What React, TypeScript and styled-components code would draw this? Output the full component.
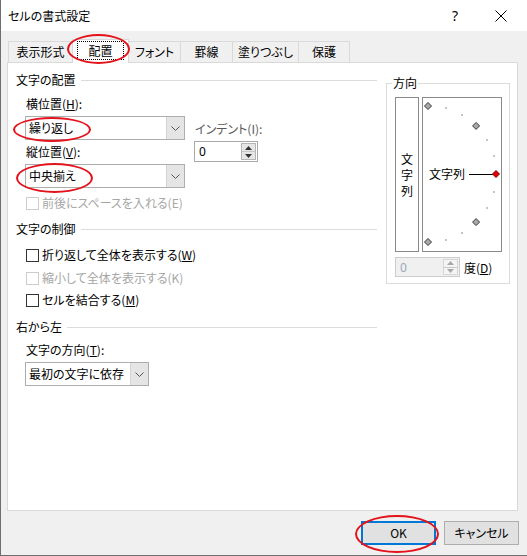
import React from "react";
import styled, { createGlobalStyle } from "styled-components";

const Global = createGlobalStyle`
  html, body { margin: 0; padding: 0; background: #ffffff; }
  body {
    font-family: "Noto Sans CJK JP", "Noto Sans", sans-serif;
    font-size: 12px;
    color: #000;
    font-feature-settings: "palt";
  }
  * { box-sizing: border-box; }
`;

const Window = styled.div`
  position: relative;
  width: 527px;
  height: 556px;
  border-left: 1px solid #6e6e6e;
  border-bottom: 1px solid #6e6e6e;
  background: #f0f0f0;
  display: flex;
  flex-direction: column;
  overflow: hidden;
`;

const TitleBar = styled.div`
  height: 31px;
  background: #ffffff;
  display: flex;
  align-items: center;
  padding-left: 7px;
  padding-right: 3px;
`;

const Title = styled.div`
  flex: 1;
  line-height: 16px;
`;

const CaptionButton = styled.div`
  width: 46px;
  height: 31px;
  display: flex;
  align-items: center;
  justify-content: center;
  font-family: "Noto Sans", "DejaVu Sans", sans-serif;
  font-size: 14px;
`;

const Body = styled.div`
  display: flex;
  flex-direction: column;
  padding: 8px 8px 0 6px;
`;

const TabStrip = styled.div`
  position: relative;
  z-index: 1;
  display: flex;
  align-items: flex-end;
  height: 24px;
  margin-left: 1px;
  margin-bottom: -1px;
`;

const Tab = styled.div<{ $w: number; $active?: boolean; $first?: boolean }>`
  position: relative;
  width: ${(p) => p.$w}px;
  height: ${(p) => (p.$active ? 24 : 21)}px;
  margin-bottom: ${(p) => (p.$active ? 0 : 1)}px;
  margin-left: ${(p) => (p.$first ? 0 : -1)}px;
  z-index: ${(p) => (p.$active ? 2 : 1)};
  border: 1px solid #d9d9d9;
  border-bottom: none;
  background: ${(p) => (p.$active ? "#ffffff" : "#f0f0f0")};
  display: flex;
  align-items: ${(p) => (p.$active ? "flex-start" : "center")};
  justify-content: center;
  padding-top: ${(p) => (p.$active ? 1 : 0)}px;
  line-height: 16px;
`;

const FocusRect = styled.div`
  width: 47px;
  height: 19px;
  border: 1px dotted #000;
  display: flex;
  align-items: center;
  justify-content: center;
  line-height: 16px;
`;

const Panel = styled.div`
  width: 511px;
  height: 449px;
  background: #ffffff;
  border: 1px solid #d9d9d9;
  display: flex;
  padding-left: 8px;
`;

const LeftCol = styled.div`
  width: 361px;
  display: flex;
  flex-direction: column;
  padding-top: 9px;
`;

const GroupHeader = styled.div<{ $mt?: number }>`
  display: flex;
  align-items: center;
  height: 16px;
  line-height: 16px;
  margin-top: ${(p) => p.$mt ?? 0}px;
  &::after {
    content: "";
    flex: 1;
    height: 1px;
    background: #dcdcdc;
    margin-left: 5px;
    margin-top: 1px;
  }
`;

const Sub = styled.div`
  display: flex;
  flex-direction: column;
  padding-left: 9px;
`;

const FieldRow = styled.div`
  display: flex;
`;

const Column = styled.div<{ $mt?: number; $ml?: number }>`
  display: flex;
  flex-direction: column;
  margin-top: ${(p) => p.$mt ?? 0}px;
  margin-left: ${(p) => p.$ml ?? 0}px;
`;

const Label = styled.div<{ $mt?: number; $muted?: boolean }>`
  height: 16px;
  line-height: 16px;
  padding-left: 1px;
  margin-top: ${(p) => p.$mt ?? 0}px;
  color: ${(p) => (p.$muted ? "#5a5a5a" : "#000")};
  white-space: nowrap;
`;

const ComboBox = styled.div<{ $w: number }>`
  width: ${(p) => p.$w}px;
  height: 24px;
  margin-top: 4px;
  display: flex;
  border: 1px solid #adadad;
  background: #ffffff;
`;

const ComboValue = styled.div`
  flex: 1;
  padding-left: 3px;
  line-height: 22px;
`;

const ComboArrow = styled.div`
  width: 18px;
  background: #e5e5e5;
  border-left: 1px solid #d4d4d4;
  display: flex;
  align-items: center;
  justify-content: center;
`;

const Spin = styled.div<{ $w: number; $h: number; $disabled?: boolean; $mt?: number }>`
  width: ${(p) => p.$w}px;
  height: ${(p) => p.$h}px;
  margin-top: ${(p) => p.$mt ?? 0}px;
  border: 1px solid ${(p) => (p.$disabled ? "#cccccc" : "#a9a9a9")};
  background: ${(p) => (p.$disabled ? "#f0f0f0" : "#ffffff")};
  display: flex;
  padding: 1px;
`;

const SpinValue = styled.div<{ $disabled?: boolean }>`
  flex: 1;
  padding-left: 3px;
  display: flex;
  align-items: center;
  font-family: "Noto Sans", "DejaVu Sans", sans-serif;
  font-size: 12px;
  color: ${(p) => (p.$disabled ? "#9aa9bd" : "#000")};
`;

const SpinButtons = styled.div<{ $disabled?: boolean }>`
  width: 15px;
  display: flex;
  flex-direction: column;
  border: 1px solid ${(p) => (p.$disabled ? "#d6d6d6" : "#b5b5b5")};
  background: ${(p) => (p.$disabled ? "#f4f4f4" : "#e6e6e6")};
`;

const SpinHalf = styled.div<{ $bottom?: boolean }>`
  flex: 1;
  display: flex;
  align-items: center;
  justify-content: center;
  border-top: ${(p) => (p.$bottom ? "1px solid #c8c8c8" : "none")};
`;

const CheckRow = styled.div<{ $mt?: number; $disabled?: boolean }>`
  display: flex;
  align-items: center;
  gap: 3px;
  height: 16px;
  line-height: 16px;
  padding-left: 1px;
  margin-top: ${(p) => p.$mt ?? 0}px;
  color: ${(p) => (p.$disabled ? "#a6a6a6" : "#000")};
  white-space: nowrap;
`;

const CheckBox = styled.div<{ $disabled?: boolean }>`
  width: 13px;
  height: 13px;
  border: 1px solid ${(p) => (p.$disabled ? "#cccccc" : "#333333")};
  background: #ffffff;
`;

const OrientGroup = styled.div`
  position: relative;
  width: 124px;
  height: 201px;
  margin-left: 9px;
  margin-top: 20px;
  border: 1px solid #dcdcdc;
  padding: 13px 0 0 8px;
  display: flex;
  flex-direction: column;
`;

const Legend = styled.div`
  position: absolute;
  left: 5px;
  top: -9px;
  background: #ffffff;
  padding: 0 1px;
  line-height: 16px;
`;

const OrientRow = styled.div`
  display: flex;
  gap: 3px;
`;

const VertBox = styled.div`
  width: 24px;
  height: 155px;
  border: 1px solid #8a8a8a;
  display: flex;
  flex-direction: column;
  align-items: center;
  justify-content: center;
  line-height: 16px;
`;

const DialBox = styled.div`
  position: relative;
  width: 80px;
  height: 155px;
  border: 1px solid #8a8a8a;
`;

const DialText = styled.div`
  position: absolute;
  left: 6px;
  top: 68px;
  line-height: 16px;
  white-space: nowrap;
`;

const DegreeRow = styled.div`
  display: flex;
  align-items: center;
  margin-top: 5px;
  gap: 4px;
`;

const Footer = styled.div`
  display: flex;
  justify-content: flex-end;
  gap: 8px;
  margin-top: 10px;
`;

const Button = styled.div<{ $default?: boolean }>`
  width: 75px;
  height: 24px;
  background: #e1e1e1;
  border: ${(p) => (p.$default ? "2px solid #0078d7" : "1px solid #adadad")};
  display: flex;
  align-items: center;
  justify-content: center;
  line-height: 16px;
`;

const Ellipse = styled.div<{ $x: number; $y: number; $w: number; $h: number }>`
  position: absolute;
  left: ${(p) => p.$x}px;
  top: ${(p) => p.$y}px;
  width: ${(p) => p.$w}px;
  height: ${(p) => p.$h}px;
  border: 2px solid #e3121b;
  border-radius: 50%;
  pointer-events: none;
  z-index: 5;
`;

const Chevron = () => (
  <svg width="9" height="5" viewBox="0 0 9 5">
    <polyline points="0.5,0.5 4.5,4.5 8.5,0.5" fill="none" stroke="#555" strokeWidth="1" />
  </svg>
);

const TriUp = ({ color }: { color: string }) => (
  <svg width="7" height="4" viewBox="0 0 7 4">
    <polygon points="0,4 7,4 3.5,0" fill={color} />
  </svg>
);

const TriDown = ({ color }: { color: string }) => (
  <svg width="7" height="4" viewBox="0 0 7 4">
    <polygon points="0,0 7,0 3.5,4" fill={color} />
  </svg>
);

const CloseIcon = () => (
  <svg width="12" height="12" viewBox="0 0 12 12">
    <line x1="0.5" y1="0.5" x2="11.5" y2="11.5" stroke="#000" strokeWidth="1" />
    <line x1="11.5" y1="0.5" x2="0.5" y2="11.5" stroke="#000" strokeWidth="1" />
  </svg>
);

const Combo = ({ w, value }: { w: number; value: string }) => (
  <ComboBox $w={w}>
    <ComboValue>{value}</ComboValue>
    <ComboArrow>
      <Chevron />
    </ComboArrow>
  </ComboBox>
);

const SpinBox = ({ w, h, mt, disabled }: { w: number; h: number; mt?: number; disabled?: boolean }) => {
  const c = disabled ? "#a8a8a8" : "#333";
  return (
    <Spin $w={w} $h={h} $mt={mt} $disabled={disabled}>
      <SpinValue $disabled={disabled}>0</SpinValue>
      <SpinButtons $disabled={disabled}>
        <SpinHalf>
          <TriUp color={c} />
        </SpinHalf>
        <SpinHalf $bottom>
          <TriDown color={c} />
        </SpinHalf>
      </SpinButtons>
    </Spin>
  );
};

const Dial = () => {
  const cx = 5;
  const cy = 76;
  const r = 68;
  const items: React.ReactNode[] = [];
  for (let a = -90; a <= 90; a += 15) {
    const rad = (a * Math.PI) / 180;
    const x = cx + r * Math.cos(rad);
    const y = cy - r * Math.sin(rad);
    if (a % 45 === 0) {
      const s = 3.5;
      const red = a === 0;
      items.push(
        <polygon
          key={a}
          points={`${x},${y - s} ${x + s},${y} ${x},${y + s} ${x - s},${y}`}
          fill={red ? "#e00000" : "#a8a8a8"}
          stroke={red ? "#8a0000" : "#3a3a3a"}
          strokeWidth="1"
        />
      );
    } else {
      items.push(<rect key={a} x={Math.round(x) - 1} y={Math.round(y) - 1} width="2" height="2" fill="#c4c4c4" />);
    }
  }
  return (
    <DialBox>
      <svg width="78" height="153" viewBox="0 0 78 153">
        <line x1="46" y1="76.5" x2="70" y2="76.5" stroke="#000" strokeWidth="1" />
        {items}
      </svg>
      <DialText>文字列</DialText>
    </DialBox>
  );
};

const tabs: { label: string; w: number }[] = [
  { label: "表示形式", w: 65 },
  { label: "配置", w: 57 },
  { label: "フォント", w: 53 },
  { label: "罫線", w: 53 },
  { label: "塗りつぶし", w: 67 },
  { label: "保護", w: 52 },
];

export default function App() {
  return (
    <>
      <Global />
      <Window>
        <TitleBar>
          <Title>セルの書式設定</Title>
          <CaptionButton>?</CaptionButton>
          <CaptionButton>
            <CloseIcon />
          </CaptionButton>
        </TitleBar>
        <Body>
          <TabStrip>
            {tabs.map((t, i) => (
              <Tab key={t.label} $w={t.w} $active={i === 1} $first={i === 0}>
                {i === 1 ? <FocusRect>{t.label}</FocusRect> : t.label}
              </Tab>
            ))}
          </TabStrip>
          <Panel>
            <LeftCol>
              <GroupHeader>文字の配置</GroupHeader>
              <Sub>
                <FieldRow>
                  <Column>
                    <Label $mt={8}>
                      横位置(<u>H</u>):
                    </Label>
                    <Combo w={160} value="繰り返し" />
                    <Label $mt={4}>
                      縦位置(<u>V</u>):
                    </Label>
                    <Combo w={160} value="中央揃え" />
                  </Column>
                  <Column $mt={33} $ml={9}>
                    <Label $muted>インデント(I):</Label>
                    <SpinBox w={64} h={21} mt={4} />
                  </Column>
                </FieldRow>
                <CheckRow $mt={7} $disabled>
                  <CheckBox $disabled />
                  前後にスペースを入れる(E)
                </CheckRow>
              </Sub>
              <GroupHeader $mt={10}>文字の制御</GroupHeader>
              <Sub>
                <CheckRow $mt={10}>
                  <CheckBox />
                  <span>
                    折り返して全体を表示する(<u>W</u>)
                  </span>
                </CheckRow>
                <CheckRow $mt={7} $disabled>
                  <CheckBox $disabled />
                  縮小して全体を表示する(K)
                </CheckRow>
                <CheckRow $mt={6}>
                  <CheckBox />
                  <span>
                    セルを結合する(<u>M</u>)
                  </span>
                </CheckRow>
              </Sub>
              <GroupHeader $mt={11}>右から左</GroupHeader>
              <Sub>
                <Label $mt={7}>
                  文字の方向(<u>T</u>):
                </Label>
                <Combo w={124} value="最初の文字に依存" />
              </Sub>
            </LeftCol>
            <OrientGroup>
              <Legend>方向</Legend>
              <OrientRow>
                <VertBox>
                  <span>文</span>
                  <span>字</span>
                  <span>列</span>
                </VertBox>
                <Dial />
              </OrientRow>
              <DegreeRow>
                <SpinBox w={65} h={20} disabled />
                <span>
                  度(<u>D</u>)
                </span>
              </DegreeRow>
            </OrientGroup>
          </Panel>
          <Footer>
            <Button $default>OK</Button>
            <Button>キャンセル</Button>
          </Footer>
        </Body>
        <Ellipse $x={66} $y={34} $w={63} $h={30} />
        <Ellipse $x={12} $y={117} $w={78} $h={25} />
        <Ellipse $x={15} $y={163} $w={77} $h={30} />
        <Ellipse $x={354} $y={515} $w={84} $h={38} />
      </Window>
    </>
  );
}
